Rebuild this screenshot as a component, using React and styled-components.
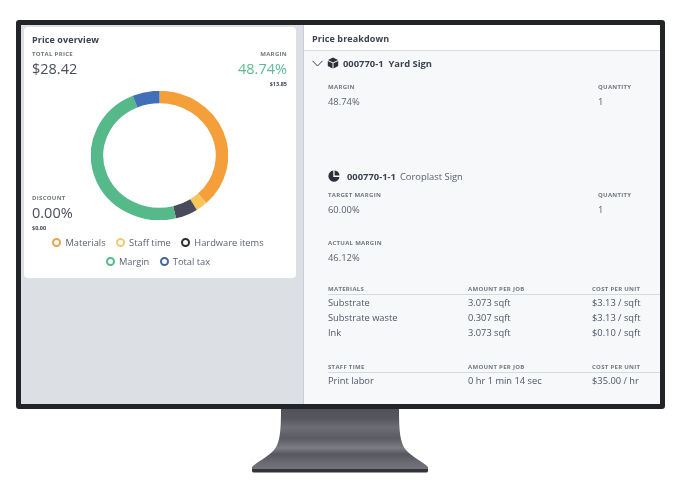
import React from "react";
import styled, { createGlobalStyle } from "styled-components";

const Global = createGlobalStyle`
  html, body { margin: 0; padding: 0; background: #fff; }
  body { font-family: "Open Sans", "Noto Sans", sans-serif; }
`;

const Page = styled.div`
  width: 681px; height: 488px; padding: 20px 0 0 16px; box-sizing: border-box;
  overflow: hidden; filter: blur(0.35px); background: #fff;
`;
const Monitor = styled.div`
  width: 649px; height: 389px; box-sizing: border-box; border: 5px solid #222428; border-radius: 3px;
  display: grid; grid-template-columns: 283px 1fr; background: #dcdfe3; overflow: hidden;
`;
const LeftPane = styled.div`
  padding: 2px 7px 0 3px; background: #dcdfe3; border-right: 1px solid #c9ced8;
`;
const Card = styled.section`
  height: 251px; box-sizing: border-box; background: #fff; border-radius: 4px; padding: 6px 9px 0 8px;
  display: flex; flex-direction: column;
`;
const Title = styled.h2`
  margin: 0; font-size: 9px; line-height: 13px; font-weight: 700; color: #3c4250; letter-spacing: 0.1px;
`;
const StatsRow = styled.div`
  display: flex; justify-content: space-between; margin-top: 4px; height: 41px;
`;
const Stat = styled.div`
  display: flex; flex-direction: column; align-items: ${p => (p.$right ? "flex-end" : "flex-start")};
`;
const Label = styled.div`
  font-size: 6px; line-height: 9px; font-weight: 700; letter-spacing: 0.3px; color: #71767f; white-space: nowrap;
`;
const BigValue = styled.div`
  font-size: 14.5px; line-height: 19px; color: ${p => p.$color || "#4a4f5c"}; white-space: nowrap;
`;
const Small = styled.div`
  font-size: 5.5px; line-height: 9px; margin-top: 2px; font-weight: 700; color: #3c4250;
`;
const ChartRow = styled.div`
  display: grid; grid-template-columns: 59px 137px 1fr; height: 142px;
`;
const Chart = styled.svg`
  display: block; width: 137px; height: 129px;
`;
const DiscountStat = styled(Stat)`
  align-self: end;
`;
const Legend = styled.div`
  display: flex; flex-direction: column; align-items: center; margin-left: -3px;
`;
const LegendRow = styled.div`
  display: flex; justify-content: center; gap: 10.5px; height: 19px; align-items: center;
`;
const LegendItem = styled.div`
  display: flex; align-items: center; gap: 4px; font-size: 9.3px; color: #5b6170; white-space: nowrap;
`;
const Ring = styled.span`
  width: 9px; height: 9px; box-sizing: border-box; border-radius: 50%; border: 2px solid ${p => p.$color};
`;

const RightPane = styled.div`
  background: #f7f8fa; display: flex; flex-direction: column; min-width: 0;
`;
const PaneHeader = styled.div`
  height: 26px; box-sizing: border-box; background: #fff; border-bottom: 1px solid #d8dbe0;
  padding: 7px 0 0 8px; flex: none;
`;
const JobRow = styled.div`
  display: flex; align-items: center; height: 14px; margin-top: ${p => p.$top}px; padding-left: ${p => p.$pad}px;
  font-size: 9.4px; font-weight: 700; color: #3c4250; white-space: nowrap;
`;
const Chevron = styled.svg`
  width: 11px; height: 7px; margin-right: 4px; flex: none;
`;
const JobIcon = styled.svg`
  width: 12px; height: 12px; flex: none; margin-right: ${p => p.$gap}px;
`;
const JobName = styled.span`
  font-weight: ${p => (p.$light ? 400 : 700)}; color: ${p => (p.$light ? "#5b6170" : "#3c4250")};
  margin-left: ${p => p.$left}px;
`;
const FieldRow = styled.div`
  display: grid; grid-template-columns: 270px 1fr; padding-left: 24px; margin-top: ${p => p.$top}px;
`;
const Field = styled.div`
  display: flex; flex-direction: column; gap: 4px;
`;
const FieldValue = styled.div`
  font-size: 9.4px; line-height: 12px; color: #5b6170;
`;
const Table = styled.div`
  margin-top: ${p => p.$top}px; padding-left: 24px; display: flex; flex-direction: column;
`;
const HeadRow = styled.div`
  display: grid; grid-template-columns: 140px 124px 1fr; height: 11px; align-items: end;
  border-bottom: 1px solid #d6d9de;
`;
const Row = styled.div`
  display: grid; grid-template-columns: 140px 124px 1fr; height: 15px; align-items: center;
  font-size: 9.3px; color: #4f5564; white-space: nowrap;
`;

const Stand = styled.svg`
  display: block; width: 178px; height: 65px; margin: 0 0 0 235px;
`;

const cx = 68.5, cy = 64.5, rx = 62.5, ry = 58.5;
function arc(a0, a1) {
  const p = a => {
    const r = ((a - 90) * Math.PI) / 180;
    return `${(cx + rx * Math.cos(r)).toFixed(2)} ${(cy + ry * Math.sin(r)).toFixed(2)}`;
  };
  return `M${p(a0)} A${rx} ${ry} 0 ${a1 - a0 > 180 ? 1 : 0} 1 ${p(a1)}`;
}
const segments = [
  [0, 137, "#f59f3a"],
  [137, 147, "#fbc458"],
  [147, 166, "#494a5c"],
  [166, 337, "#56b98a"],
  [337, 360, "#4270b8"],
];

const legend = [
  [["Materials", "#e8a44c"], ["Staff time", "#f3ca72"], ["Hardware items", "#2c2e36"]],
  [["Margin", "#56b98a"], ["Total tax", "#46659f"]],
];

const materials = [
  ["Substrate", "3.073 sqft", "$3.13 / sqft"],
  ["Substrate waste", "0.307 sqft", "$3.13 / sqft"],
  ["Ink", "3.073 sqft", "$0.10 / sqft"],
];

export default function App() {
  return (
    <Page>
      <Global />
      <Monitor>
        <LeftPane>
          <Card>
            <Title>Price overview</Title>
            <StatsRow>
              <Stat>
                <Label>TOTAL PRICE</Label>
                <BigValue>$28.42</BigValue>
              </Stat>
              <Stat $right>
                <Label>MARGIN</Label>
                <BigValue $color="#5fbb92">48.74%</BigValue>
                <Small>$13.85</Small>
              </Stat>
            </StatsRow>
            <ChartRow>
              <DiscountStat>
                <Label>DISCOUNT</Label>
                <BigValue>0.00%</BigValue>
                <Small>$0.00</Small>
              </DiscountStat>
              <Chart viewBox="0 0 137 129">
                {segments.map(([a, b, c]) => (
                  <path key={c} d={arc(a, b)} fill="none" stroke={c} strokeWidth="12.5" />
                ))}
              </Chart>
            </ChartRow>
            <Legend>
              {legend.map((row, i) => (
                <LegendRow key={i}>
                  {row.map(([name, color]) => (
                    <LegendItem key={name}><Ring $color={color} />{name}</LegendItem>
                  ))}
                </LegendRow>
              ))}
            </Legend>
          </Card>
        </LeftPane>
        <RightPane>
          <PaneHeader><Title>Price breakdown</Title></PaneHeader>
          <JobRow $top={5} $pad={8}>
            <Chevron viewBox="0 0 11 7"><path d="M0.5 0.8 L5.5 6 L10.5 0.8" fill="none" stroke="#3c4250" strokeWidth="1" /></Chevron>
            <JobIcon $gap={0} viewBox="0 0 12 12">
              <path d="M6 0.5 L11 3 L6 5.4 L1 3 Z" fill="#2c2f38" />
              <path d="M0.8 4 L5.5 6.3 V11.6 L0.8 9 Z M11.2 4 L6.5 6.3 V11.6 L11.2 9 Z" fill="#2c2f38" />
            </JobIcon>
            <JobName $left={4}>000770-1&nbsp; Yard Sign</JobName>
          </JobRow>
          <FieldRow $top={13}>
            <Field><Label>MARGIN</Label><FieldValue>48.74%</FieldValue></Field>
            <Field><Label>QUANTITY</Label><FieldValue>1</FieldValue></Field>
          </FieldRow>
          <JobRow $top={61} $pad={24}>
            <JobIcon $gap={7} viewBox="0 0 12 12">
              <path d="M5.3 0.6 A5.6 5.6 0 1 0 11.5 7 L5.3 7 Z" fill="#2c2f38" />
              <path d="M6.6 0.5 A5.2 5.2 0 0 1 11.5 5.6 L6.6 5.6 Z" fill="#2c2f38" />
            </JobIcon>
            <JobName $left={0}>000770-1-1</JobName>
            <JobName $light $left={4}>Coroplast Sign</JobName>
          </JobRow>
          <FieldRow $top={8}>
            <Field><Label>TARGET MARGIN</Label><FieldValue>60.00%</FieldValue></Field>
            <Field><Label>QUANTITY</Label><FieldValue>1</FieldValue></Field>
          </FieldRow>
          <FieldRow $top={23}>
            <Field><Label>ACTUAL MARGIN</Label><FieldValue>46.12%</FieldValue></Field>
          </FieldRow>
          <Table $top={19}>
            <HeadRow>
              <Label>MATERIALS</Label><Label>AMOUNT PER JOB</Label><Label>COST PER UNIT</Label>
            </HeadRow>
            <div>
              {materials.map(r => (
                <Row key={r[0]}><span>{r[0]}</span><span>{r[1]}</span><span>{r[2]}</span></Row>
              ))}
            </div>
          </Table>
          <Table $top={21}>
            <HeadRow>
              <Label>STAFF TIME</Label><Label>AMOUNT PER JOB</Label><Label>COST PER UNIT</Label>
            </HeadRow>
            <Row><span>Print labor</span><span>0 hr 1 min 14 sec</span><span>$35.00 / hr</span></Row>
          </Table>
        </RightPane>
      </Monitor>
      <Stand viewBox="0 0 178 65">
        <defs>
          <linearGradient id="neck" x1="0" y1="0" x2="0" y2="1">
            <stop offset="0" stopColor="#505159" />
            <stop offset="0.16" stopColor="#55565e" />
            <stop offset="0.3" stopColor="#6c6d75" />
            <stop offset="0.48" stopColor="#5a5b63" />
            <stop offset="0.64" stopColor="#7c7d84" />
            <stop offset="0.74" stopColor="#56575f" />
            <stop offset="0.9" stopColor="#6d6e75" />
            <stop offset="1" stopColor="#74757b" />
          </linearGradient>
        </defs>
        <path d="M30 0 H148 C148 22 149 34 155 41 C160 47 172 53 177 58 V61 H1 V58 C6 53 18 47 23 41 C29 34 30 22 30 0 Z" fill="url(#neck)" />
        <path d="M1 60 H177 V62 Q177 63.5 175 63.5 H3 Q1 63.5 1 62 Z" fill="#33343a" />
      </Stand>
    </Page>
  );
}
